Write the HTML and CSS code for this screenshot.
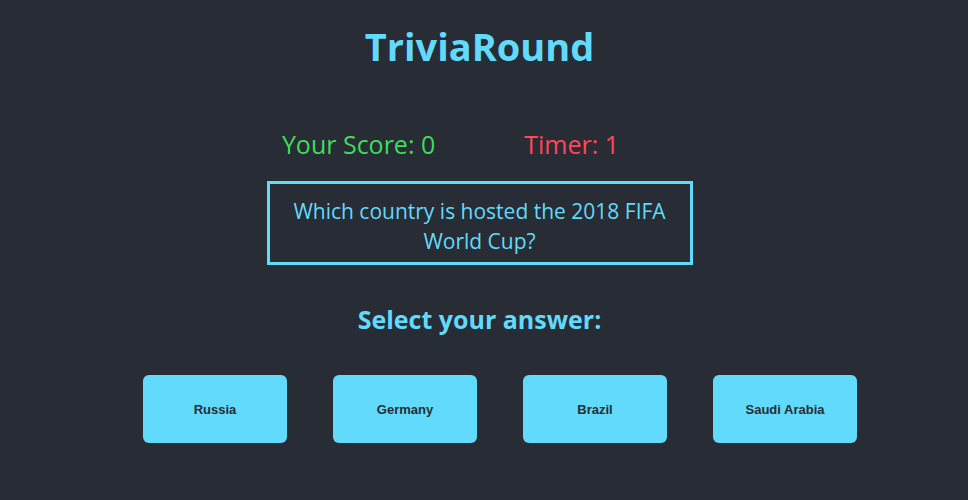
FILE: index.html
```html
<!DOCTYPE html>
<html>
<head>
<meta charset="utf-8">
<link rel="stylesheet" href="styles.css">
</head>
<body>
<div class="app">
  <h1 class="title">TriviaRound</h1>
  <div class="stats">
    <span class="score">Your Score: 0</span>
    <span class="timer">Timer: 1</span>
  </div>
  <div class="question">Which country is hosted the 2018 FIFA World Cup?</div>
  <h2 class="prompt">Select your answer:</h2>
  <div class="answers">
    <button class="answer">Russia</button>
    <button class="answer">Germany</button>
    <button class="answer">Brazil</button>
    <button class="answer">Saudi Arabia</button>
  </div>
</div>
</body>
</html>
```
FILE: styles.css
```css
html, body {
  margin: 0;
  padding: 0;
  background: #282c34;
  height: 100%;
}
body {
  font-family: "Open Sans", "Noto Sans", sans-serif;
}
.app {
  width: 959px;
  display: flex;
  flex-direction: column;
  align-items: center;
  text-align: center;
}
.title {
  margin: 22px 0 0;
  font-size: 38px;
  line-height: 48px;
  font-weight: 700;
  color: #61dafb;
}
.stats {
  margin-top: 57px;
  display: flex;
  gap: 89px;
  font-size: 25px;
  line-height: 34px;
  margin-left: -58px;
}
.score { color: #3ddc5c; }
.timer { color: #ff4757; }
.question {
  margin-top: 20px;
  width: 426px;
  box-sizing: border-box;
  height: 84px;
  border: 3px solid #61dafb;
  color: #61dafb;
  font-size: 21px;
  line-height: 30px;
  padding: 12px 20px 0;
}
.prompt {
  margin: 37px 0 0;
  font-size: 25px;
  line-height: 34px;
  font-weight: 700;
  color: #61dafb;
}
.answers {
  margin-top: 39px;
  margin-left: 41px;
  display: flex;
  gap: 46px;
}
.answer {
  width: 144px;
  height: 68px;
  border: none;
  border-radius: 6px;
  background: #61dafb;
  color: #282c34;
  font-family: "Liberation Sans", Arial, sans-serif;
  font-weight: 700;
  font-size: 13px;
  padding: 0;
}
```
